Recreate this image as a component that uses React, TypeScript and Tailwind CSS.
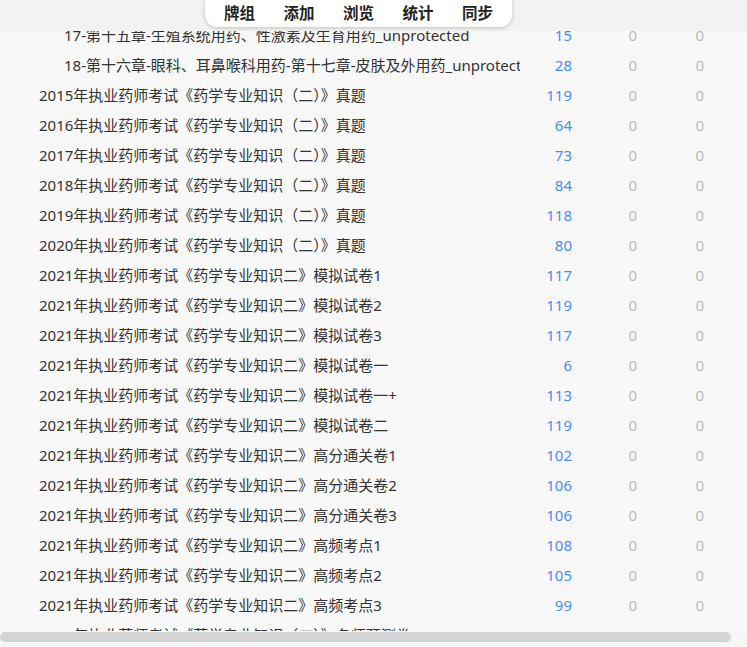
const decks = [
  { name: "17-第十五章-生殖系统用药、性激素及生育用药_unprotected", due: 15, child: true },
  { name: "18-第十六章-眼科、耳鼻喉科用药-第十七章-皮肤及外用药_unprotected", due: 28, child: true },
  { name: "2015年执业药师考试《药学专业知识（二）》真题", due: 119 },
  { name: "2016年执业药师考试《药学专业知识（二）》真题", due: 64 },
  { name: "2017年执业药师考试《药学专业知识（二）》真题", due: 73 },
  { name: "2018年执业药师考试《药学专业知识（二）》真题", due: 84 },
  { name: "2019年执业药师考试《药学专业知识（二）》真题", due: 118 },
  { name: "2020年执业药师考试《药学专业知识（二）》真题", due: 80 },
  { name: "2021年执业药师考试《药学专业知识二》模拟试卷1", due: 117 },
  { name: "2021年执业药师考试《药学专业知识二》模拟试卷2", due: 119 },
  { name: "2021年执业药师考试《药学专业知识二》模拟试卷3", due: 117 },
  { name: "2021年执业药师考试《药学专业知识二》模拟试卷一", due: 6 },
  { name: "2021年执业药师考试《药学专业知识二》模拟试卷一+", due: 113 },
  { name: "2021年执业药师考试《药学专业知识二》模拟试卷二", due: 119 },
  { name: "2021年执业药师考试《药学专业知识二》高分通关卷1", due: 102 },
  { name: "2021年执业药师考试《药学专业知识二》高分通关卷2", due: 106 },
  { name: "2021年执业药师考试《药学专业知识二》高分通关卷3", due: 106 },
  { name: "2021年执业药师考试《药学专业知识二》高频考点1", due: 108 },
  { name: "2021年执业药师考试《药学专业知识二》高频考点2", due: 105 },
  { name: "2021年执业药师考试《药学专业知识二》高频考点3", due: 99 },
  { name: "2021年执业药师考试《药学专业知识（二）》名师预测卷1", due: 103 },
];

const tabs = ["牌组", "添加", "浏览", "统计", "同步"];

export default function App() {
  return (
    <div
      className="relative h-[647px] w-[747px] overflow-hidden bg-[#f8f8f8] text-[15px] text-[#333]"
      style={{ fontFamily: '"Noto Sans", "Noto Sans CJK SC", sans-serif' }}
    >
      {/* deck list */}
      <div className="pt-[20px]">
        {decks.map((d, i) => (
          <div key={i} className="flex h-[30px] items-center">
            <div
              className={`w-[520px] overflow-hidden whitespace-nowrap ${d.child ? "pl-[64px]" : "pl-[39px]"}`}
            >
              {d.name}
            </div>
            <div className="w-[52px] text-right text-[#4a8cf5]">{d.due}</div>
            <div className="w-[65px] text-right text-[#bbbbbb]">0</div>
            <div className="w-[67px] text-right text-[#bbbbbb]">0</div>
          </div>
        ))}
      </div>

      {/* top bar */}
      <div className="absolute inset-x-0 top-0 h-[31px] bg-[#f2f2f2]" />
      <div className="absolute left-[205px] top-0 flex h-[27px] w-[307px] items-center justify-between rounded-b-xl bg-white px-[19px] text-[15.5px] font-bold text-[#222] shadow-[0_1px_4px_rgba(0,0,0,0.2)]">
        {tabs.map((t) => (
          <span key={t} className="leading-none">
            {t}
          </span>
        ))}
      </div>

      {/* horizontal scrollbar */}
      <div className="absolute inset-x-0 bottom-0 h-[16px] bg-[#f6f6f6] pt-[1px]">
        <div className="h-[10px] w-[731px] rounded-full bg-[#d4d4d4]" />
      </div>
    </div>
  );
}
